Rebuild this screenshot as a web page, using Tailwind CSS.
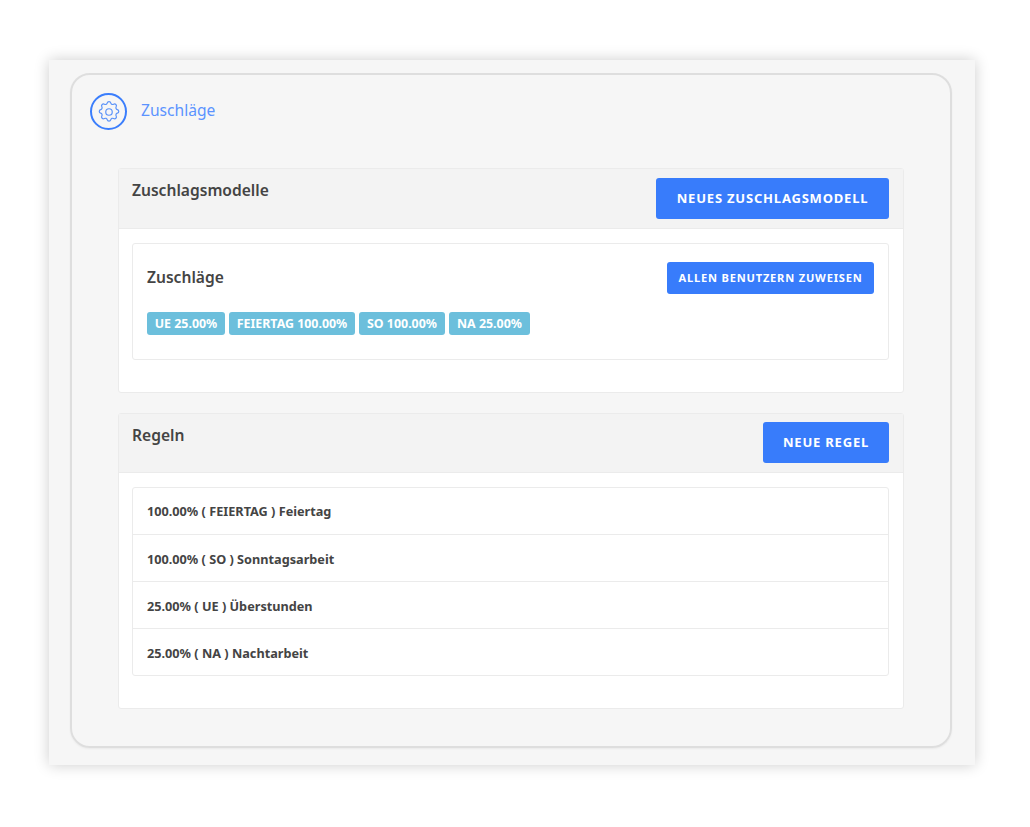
<!DOCTYPE html>
<html lang="en">
<head>
    <meta charset="UTF-8">
    <title>Zuschläge</title>
    <script src="https://cdn.jsdelivr.net/npm/@tailwindcss/browser@4"></script>
</head>
<body class="bg-white h-[827px] overflow-hidden font-['Noto_Sans',sans-serif]">
    <div class="ml-[49px] mt-[60px] w-[926px] h-[705px] pt-[13px] pl-[21px] pr-[23px] bg-[#f6f6f6] shadow-[0_0_14px_rgba(0,0,0,0.2)]">
        <div class="h-[675px] rounded-[20px] border-2 border-[#dedede] shadow-[0_1px_2px_rgba(0,0,0,0.05)]">
            <!-- Page title -->
            <div class="flex items-center ml-[18px] mt-[18px] gap-[14px]">
                <div class="w-[37px] h-[37px] rounded-full border-2 border-[#3b7efc] flex items-center justify-center">
                    <svg class="w-[26px] h-[26px] text-[#5b93f8]" viewBox="0 0 24 24" fill="none" stroke="currentColor" stroke-width="1.1" stroke-linecap="round" stroke-linejoin="round">
                        <path d="M10.33 3.75c.43-1.75 2.92-1.75 3.35 0a1.72 1.72 0 0 0 2.57 1.07c1.54-.94 3.3.82 2.37 2.37a1.72 1.72 0 0 0 1.07 2.56c1.75.43 1.75 2.93 0 3.36a1.72 1.72 0 0 0-1.07 2.56c.94 1.55-.83 3.31-2.37 2.38a1.72 1.72 0 0 0-2.57 1.06c-.43 1.76-2.92 1.76-3.35 0a1.72 1.72 0 0 0-2.57-1.06c-1.54.93-3.3-.83-2.37-2.38a1.72 1.72 0 0 0-1.07-2.56c-1.75-.43-1.75-2.93 0-3.36a1.72 1.72 0 0 0 1.07-2.56c-.94-1.55.83-3.31 2.37-2.37.97.59 2.27.07 2.57-1.07z"/>
                        <circle cx="12" cy="12" r="3"/>
                    </svg>
                </div>
                <span class="text-[15.6px] text-[#5b93ff] leading-[24px] -mt-[3px]">Zuschläge</span>
            </div>

            <div class="mx-[46px] mt-[38px] flex flex-col gap-[20px]">
                <!-- Zuschlagsmodelle -->
                <section class="h-[225px] bg-white rounded-[3px] border border-[#ebebeb]">
                    <div class="h-[60px] bg-[#f3f3f3] border-b border-[#ebebeb] flex justify-between pl-[13px] pr-[14px] pt-[9px]">
                        <h2 class="text-[15.6px] font-semibold text-[#444] leading-[26px] -mt-[1px]">Zuschlagsmodelle</h2>
                        <button class="w-[233px] h-[41px] bg-[#387cfb] rounded-[3px] text-white text-[13px] font-bold tracking-[0.8px]">NEUES ZUSCHLAGSMODELL</button>
                    </div>
                    <div class="ml-[13px] mr-[14px] mt-[14px] h-[117px] border border-[#ebebeb] rounded-[3px] px-[14px] pt-[18px]">
                        <div class="flex justify-between items-center">
                            <h3 class="text-[15.6px] font-semibold text-[#444] leading-[32px] -mt-[2px]">Zuschläge</h3>
                            <button class="w-[207px] h-[32px] bg-[#387cfb] rounded-[3px] text-white text-[11.1px] font-bold tracking-[0.8px]">ALLEN BENUTZERN ZUWEISEN</button>
                        </div>
                        <div class="flex gap-[4px] mt-[18px]">
                            <span class="h-[23px] w-[78px] text-center bg-[#6cbfdc] rounded-[3px] text-white text-[12.4px] font-bold leading-[23px]">UE 25.00%</span>
                            <span class="h-[23px] w-[126px] text-center bg-[#6cbfdc] rounded-[3px] text-white text-[12.4px] font-bold leading-[23px]">FEIERTAG 100.00%</span>
                            <span class="h-[23px] w-[86px] text-center bg-[#6cbfdc] rounded-[3px] text-white text-[12.4px] font-bold leading-[23px]">SO 100.00%</span>
                            <span class="h-[23px] w-[81px] text-center bg-[#6cbfdc] rounded-[3px] text-white text-[12.4px] font-bold leading-[23px]">NA 25.00%</span>
                        </div>
                    </div>
                </section>

                <!-- Regeln -->
                <section class="h-[296px] bg-white rounded-[3px] border border-[#ebebeb]">
                    <div class="h-[59px] bg-[#f3f3f3] border-b border-[#ebebeb] flex justify-between pl-[13px] pr-[14px] pt-[8px]">
                        <h2 class="text-[15.6px] font-semibold text-[#444] leading-[26px]">Regeln</h2>
                        <button class="w-[126px] h-[41px] bg-[#387cfb] rounded-[3px] text-white text-[13px] font-bold tracking-[0.8px]">NEUE REGEL</button>
                    </div>
                    <ul class="ml-[13px] mr-[14px] mt-[14px] border border-[#ebebeb] rounded-[3px] divide-y divide-[#ebebeb] text-[12.7px] font-bold text-[#444]">
                        <li class="h-[47px] px-[14px] leading-[47px]">100.00% ( FEIERTAG ) Feiertag</li>
                        <li class="h-[47px] px-[14px] leading-[48px]">100.00% ( SO ) Sonntagsarbeit</li>
                        <li class="h-[47px] px-[14px] leading-[48px]">25.00% ( UE ) Überstunden</li>
                        <li class="h-[46px] px-[14px] leading-[48px]">25.00% ( NA ) Nachtarbeit</li>
                    </ul>
                </section>
            </div>
        </div>
    </div>
</body>
</html>
